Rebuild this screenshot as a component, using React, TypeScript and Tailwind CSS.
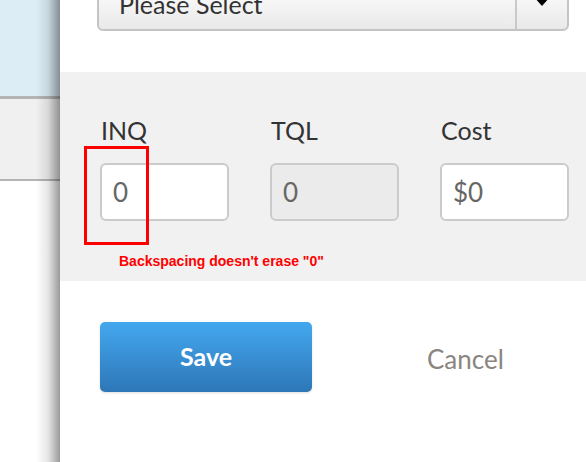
import React from 'react';

const fields = [
    { label: 'INQ', value: '0', disabled: false },
    { label: 'TQL', value: '0', disabled: true },
    { label: 'Cost', value: '$0', disabled: false },
];

const App: React.FC = () => {
    return (
        <div className="flex w-[586px] h-[462px] overflow-hidden bg-white" style={{ fontFamily: 'Lato, "Open Sans", sans-serif' }}>
            {/* page behind the drawer */}
            <div className="relative w-[60px] shrink-0 flex flex-col">
                <div className="h-[96px] bg-[#ddedf6]"></div>
                <div className="h-[3px] bg-[#b4b4b4]"></div>
                <div className="h-[80px] bg-[#f0f0f0]"></div>
                <div className="h-[2px] bg-[#b4b4b4]"></div>
                <div className="flex-1 bg-white"></div>
                <div className="absolute inset-y-0 right-0 w-[24px] bg-gradient-to-r from-transparent via-black/10 to-black/40"></div>
            </div>

            {/* drawer */}
            <div className="flex-1 flex flex-col">
                <div className="h-[72px] pl-[37px] pr-[17px]">
                    <div className="mt-[-21px] h-[52px] flex rounded-b-[6px] border-2 border-[#c4c4c4] bg-gradient-to-b from-white to-[#e9e9e9] overflow-hidden">
                        <div className="flex-1 flex items-center pl-[20px] text-[25px] text-[#333]">Please Select</div>
                        <div className="w-[52px] border-l-2 border-[#c9c9c9] flex items-start justify-center pt-[16px]">
                            <svg width="16" height="10" viewBox="0 0 16 10"><path d="M0 0h16L8 9z" fill="#000" /></svg>
                        </div>
                    </div>
                </div>

                <div className="relative h-[209px] bg-[#f1f1f1] pl-[40px] pt-[43px]">
                    <div className="flex gap-[41px]">
                        {fields.map((f) => (
                            <div key={f.label} className="w-[129px] flex flex-col">
                                <div className="text-[25px] leading-[30px] text-[#333] pl-[1px]">{f.label}</div>
                                <div
                                    className={`mt-[18px] h-[58px] rounded-[6px] border-2 border-[#cbcbcb] flex items-center pl-[11px] text-[26px] text-[#666] ${f.disabled ? 'bg-[#ebebeb]' : 'bg-white'}`}
                                >
                                    {f.value}
                                </div>
                            </div>
                        ))}
                    </div>
                    <div className="mt-[30px] pl-[19px] text-[14px] font-bold text-[#ff0000]" style={{ fontFamily: '"Liberation Sans", Arial, sans-serif' }}>
                        Backspacing doesn't erase "0"
                    </div>
                    {/* annotation box */}
                    <div className="absolute left-[24px] top-[74px] w-[65px] h-[99px] border-[3px] border-[#ff0000]"></div>
                </div>

                <div className="flex items-start pl-[40px] pt-[41px]">
                    <button className="w-[212px] h-[70px] rounded-[5px] bg-gradient-to-b from-[#43a8ef] to-[#2e77b7] text-white font-bold text-[25px] shadow-sm">
                        Save
                    </button>
                    <button className="ml-[115px] mt-[18px] text-[26px] text-[#8b8580]">Cancel</button>
                </div>
            </div>
        </div>
    );
};

export default App;
